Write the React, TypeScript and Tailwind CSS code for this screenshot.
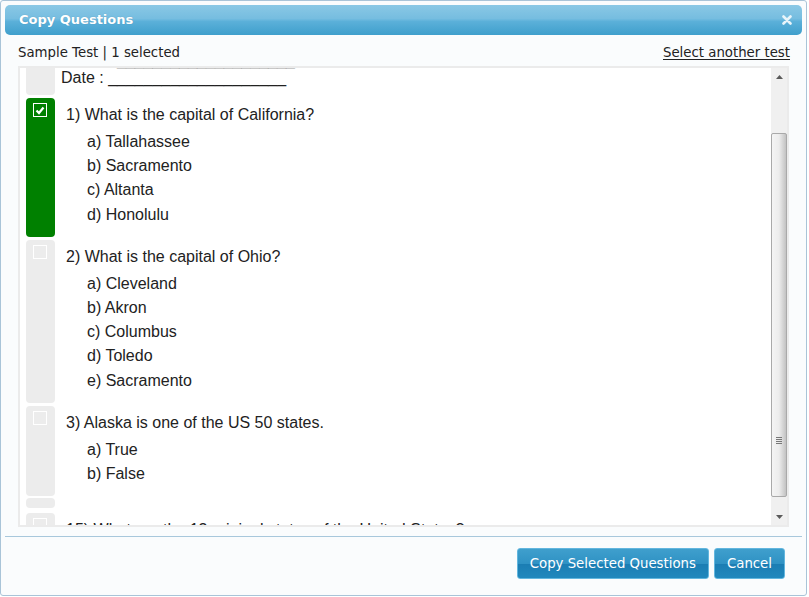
import React from 'react'

type Question = {
  num: number
  text: string
  options: string[]
  checked?: boolean
}

const questions: Question[] = [
  {
    num: 1,
    text: 'What is the capital of California?',
    options: ['Tallahassee', 'Sacramento', 'Altanta', 'Honolulu'],
    checked: true
  },
  {
    num: 2,
    text: 'What is the capital of Ohio?',
    options: ['Cleveland', 'Akron', 'Columbus', 'Toledo', 'Sacramento']
  },
  {
    num: 3,
    text: 'Alaska is one of the US 50 states.',
    options: ['True', 'False']
  }
]

const letters = 'abcdefgh'

function CheckBox({ checked }: { checked?: boolean }) {
  if (checked) {
    return (
      <div className="w-[14px] h-[14px] border-[1.5px] border-white flex items-center justify-center">
        <svg width="10" height="9" viewBox="0 0 10 9">
          <path d="M1.5 4.5 L4 7 L8.5 1.5" fill="none" stroke="#ffffff" strokeWidth="2.2" />
        </svg>
      </div>
    )
  }
  return <div className="w-[14px] h-[14px] border border-white" />
}

function QuestionRow({ q, className = '' }: { q: Question; className?: string }) {
  return (
    <div className={'flex ' + className}>
      <div
        className={
          'w-[29px] shrink-0 rounded-[4px] pt-[5px] pl-[7px] ' +
          (q.checked ? 'bg-[#008000]' : 'bg-[#ececec]')
        }
      >
        <CheckBox checked={q.checked} />
      </div>
      <div className="pl-[11px] pt-[6px] pb-[10px]">
        <div className="leading-[22px]">
          {q.num}) {q.text}
        </div>
        <div className="mt-[4px] pl-[21px]">
          {q.options.map((o, i) => (
            <div key={o} className="leading-[24.2px]">
              {letters[i]}) {o}
            </div>
          ))}
        </div>
      </div>
    </div>
  )
}

function Scrollbar() {
  return (
    <div className="w-[16px] shrink-0 bg-[#f0f0f0] flex flex-col">
      <div className="h-[17px] flex items-center justify-center">
        <svg width="7" height="4" viewBox="0 0 7 4">
          <path d="M0 4 L3.5 0 L7 4 Z" fill="#5a5a5a" />
        </svg>
      </div>
      <div className="h-[48px]" />
      <div className="h-[364px] border border-[#a9a9a9] rounded-[2px] bg-[linear-gradient(to_right,#f4f4f4_0%,#ececec_50%,#cfcfcf_85%,#c2c2c2_100%)] flex flex-col justify-end items-center pb-[52px]">
        <div className="flex flex-col gap-[1px]">
          <div className="w-[6px] h-[1px] bg-[#777]" />
          <div className="w-[6px] h-[1px] bg-[#777]" />
          <div className="w-[6px] h-[1px] bg-[#777]" />
          <div className="w-[6px] h-[1px] bg-[#777]" />
        </div>
      </div>
      <div className="flex-1" />
      <div className="h-[17px] flex items-center justify-center">
        <svg width="7" height="4" viewBox="0 0 7 4">
          <path d="M0 0 L7 0 L3.5 4 Z" fill="#5a5a5a" />
        </svg>
      </div>
    </div>
  )
}

export default function App() {
  return (
    <div className="w-[809px] h-[597px] bg-white overflow-hidden">
      <div className="w-[807px] h-[596px] border border-[#a9c4d8] rounded-[3px] bg-[#fafcfd] p-[4px] flex flex-col font-['DejaVu_Sans',sans-serif]">
        {/* title bar */}
        <div className="h-[30px] shrink-0 rounded-[5px] bg-[linear-gradient(to_bottom,#8ac8e5_0%,#76bde0_45%,#5bb0d9_55%,#3f9fcc_100%)] flex items-center justify-between pl-[14px] pr-[10px]">
          <span className="text-white font-bold text-[13px] [text-shadow:0_0_1px_rgba(0,60,100,0.3)]">
            Copy Questions
          </span>
          <svg width="10" height="10" viewBox="0 0 10 10">
            <path d="M1.5 1.5 L8.5 8.5 M8.5 1.5 L1.5 8.5" stroke="#e8f4fa" strokeWidth="2.6" strokeLinecap="round" />
          </svg>
        </div>

        {/* sub header */}
        <div className="h-[31px] shrink-0 flex justify-between items-start pt-[10px] pl-[13px] pr-[12px] text-[13.3px] leading-[16px] text-[#222]">
          <span>Sample Test | 1 selected</span>
          <span className="underline underline-offset-[2px]">Select another test</span>
        </div>

        {/* question list */}
        <div className="mx-[13px] h-[461px] shrink-0 border-2 border-[#ebebeb] bg-white flex">
          <div className="flex-1 overflow-hidden pl-[6px] font-['Liberation_Sans',Arial,sans-serif] text-[16px] text-[#222]">
            <div className="-mt-[23px] flex flex-col gap-[3px]">
              <div className="flex">
                <div className="w-[29px] shrink-0 rounded-[4px] bg-[#ececec]" />
                <div className="pl-[6px] pt-[6px] pb-[8px] leading-[18px]">
                  <div>Name : ____________________</div>
                  <div>Date : ____________________</div>
                </div>
              </div>
              {questions.map(q => (
                <QuestionRow key={q.num} q={q} />
              ))}
              <div className="flex h-[10px] -mt-[1px]">
                <div className="w-[29px] shrink-0 rounded-[4px] bg-[#ececec]" />
              </div>
              <QuestionRow
                className="mt-[2px]"
                q={{
                  num: 15,
                  text: 'What are the 13 original states of the United States?',
                  options: ['Virginia', 'Georgia']
                }}
              />
            </div>
          </div>
          <Scrollbar />
        </div>

        {/* footer */}
        <div className="mt-[9px] border-t border-[#a8c8dc]" />
        <div className="flex justify-end gap-[5px] pr-[17px] pt-[11px]">
          <button className="h-[31px] px-[12px] rounded-[3px] border border-[#62b6de] bg-[linear-gradient(to_bottom,#3f9fcd_0%,#2f92c4_50%,#1b7db3_52%,#2088bd_100%)] text-white text-[13.3px] leading-[29px]">
            Copy Selected Questions
          </button>
          <button className="h-[31px] px-[12px] rounded-[3px] border border-[#62b6de] bg-[linear-gradient(to_bottom,#3f9fcd_0%,#2f92c4_50%,#1b7db3_52%,#2088bd_100%)] text-white text-[13.3px] leading-[29px]">
            Cancel
          </button>
        </div>
      </div>
    </div>
  )
}
